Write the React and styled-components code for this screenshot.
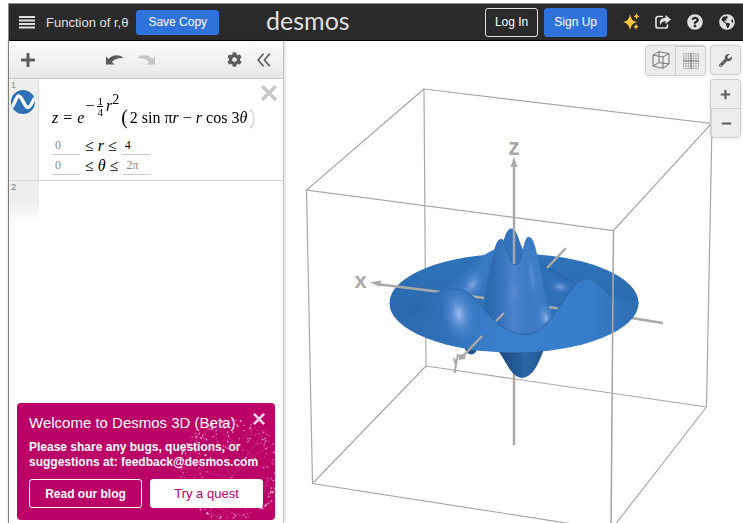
import React from 'react'
import styled, { createGlobalStyle } from 'styled-components';
import { FaCog, FaPlus, FaMinus, FaWrench, FaQuestionCircle, FaGlobeAmericas } from 'react-icons/fa';

const GlobalStyle = createGlobalStyle`
    * {
        box-sizing: border-box;
    }
    body {
        margin: 0;
        background: #fff;
        font-family: "Liberation Sans", Arial, sans-serif;
        font-size: 12px;
    }
    button, input {
        font-family: inherit;
    }
`;
const Page = styled.div`
    display: flex;
    flex-direction: column;
    height: 100vh;
    padding: 3px 0 0 8px;
    overflow: hidden;
`;
const Frame = styled.div`
    display: flex;
    flex-direction: column;
    flex: 1;
    min-height: 0;
    border-top: 1px solid #8c8c8c;
    border-left: 1px solid #8c8c8c;
`;
const Header = styled.header`
    display: flex;
    align-items: center;
    height: 37px;
    padding: 0 7px 0 9px;
    background: #2a2a2a;
    border-bottom: 1px solid #000;
    color: #e0e0e0;
`;
const IconButton = styled.button`
    display: flex;
    align-items: center;
    justify-content: center;
    width: ${props => props.$width || 18}px;
    height: 24px;
    padding: 0;
    border: none;
    background: none;
    color: ${props => props.$color || '#e0e0e0'};
    font-size: ${props => props.$size || 16}px;
    cursor: pointer;
`;
const Title = styled.h1`
    margin: 0 8px 0 10px;
    font-size: 13px;
    font-weight: normal;
    white-space: nowrap;
`;
const Button = styled.button`
    height: ${props => props.$small ? 25 : 29}px;
    padding: 0 ${props => props.$small ? 11 : 9}px;
    border: 1px solid ${props => props.$outline ? '#ddd' : '#2f72dc'};
    border-radius: 3px;
    background: ${props => props.$outline ? 'transparent' : '#2f72dc'};
    color: #fff;
    font-size: 12px;
    white-space: nowrap;
    cursor: pointer;
`;
const Logo = styled.a`
    margin-left: 47px;
    color: #e0e0e0;
    font-family: Lato, sans-serif;
    font-size: 25px;
    line-height: 32px;
    height: 36px;
    text-decoration: none;
`;
const Account = styled.nav`
    display: flex;
    align-items: center;
    gap: 6px;
    margin-left: auto;
`;
const HeaderIcons = styled.div`
    display: flex;
    gap: 14px;
    margin-left: 9px;
`;
const Main = styled.main`
    display: flex;
    flex: 1;
    min-height: 0;
`;
const Sidebar = styled.aside`
    display: flex;
    flex-direction: column;
    flex: 0 0 275px;
    border-right: 1px solid #c4c4c4;
    box-shadow: 0 0 4px rgba(0, 0, 0, 0.25);
    z-index: 1;
`;
const Toolbar = styled.div`
    display: flex;
    align-items: center;
    height: 38px;
    padding: 0 4px 0 10px;
    background: linear-gradient(#fcfcfc, #e8e8e8);
    border-bottom: 1px solid #c8c8c8;
`;
const History = styled.div`
    display: flex;
    gap: 13px;
    margin: 0 auto;
    padding-left: 4px;
`;
const Row = styled.section`
    display: flex;
    height: ${props => props.$height}px;
    border-bottom: 1px solid ${props => props.$empty ? 'transparent' : '#d8d8d8'};
`;
const Gutter = styled.div`
    flex: 0 0 30px;
    padding: 2px;
    background: ${props => props.$fade ? 'linear-gradient(#eee 45%, #fff)' : '#eee'};
    border-right: 1px solid ${props => props.$fade ? 'transparent' : '#dcdcdc'};
    color: ${props => props.$fade ? '#6a7f94' : '#9a8a70'};
    font-size: 9px;
    line-height: 9px;
`;
const CurveButton = styled(IconButton)`
    width: 24px;
`;
const Expression = styled.div`
    display: flex;
    flex-direction: column;
    flex: 1;
    min-width: 0;
    padding: 4px 5px 0 13px;
    font-family: "Liberation Serif", "Times New Roman", serif;
    font-size: 16px;
`;
const RemoveButton = styled(IconButton)`
    align-self: flex-end;
    height: 20px;
`;
const Formula = styled.div`
    display: flex;
    align-items: flex-end;
    width: 204px;
    height: 41px;
    margin-top: -9px;
    padding-bottom: 8px;
    line-height: 18px;
    white-space: nowrap;
    mask-image: linear-gradient(to right, #000 96%, transparent);
`;
const Base = styled.span`
    display: flex;
    gap: 5px;
    margin-right: 1px;
`;
const Exponent = styled.span`
    display: inline-flex;
    align-items: center;
    align-self: flex-start;
    height: 24px;
    font-size: 16px;
    line-height: 24px;
`;
const Fraction = styled.span`
    display: inline-flex;
    flex-direction: column;
    margin: 0 2px;
    padding: 0 1px;
    font-size: 11px;
    line-height: 10px;
`;
const Numerator = styled.span`
    border-bottom: 1px solid #000;
`;
const Squared = styled.sup`
    align-self: flex-start;
    font-size: 14px;
    line-height: 12px;
`;
const Paren = styled.span`
    padding: 0 2px;
    font-size: 20px;
    line-height: 20px;
    color: ${props => props.$ghost ? '#888' : '#000'};
`;
const Domain = styled.div`
    display: flex;
    align-items: flex-end;
    gap: 5px;
    height: 20px;
    line-height: 18px;
`;
const Bound = styled.input`
    width: 28px;
    height: 18px;
    padding: 0 3px;
    border: none;
    border-bottom: 1px solid #ccc;
    background: none;
    color: ${props => props.$set ? '#000' : '#888'};
    font-family: "Liberation Serif", serif;
    font-size: 12px;
`;
const Promo = styled.section`
    position: relative;
    margin: auto 8px 3px;
    padding: 11px 12px 12px;
    border-radius: 4px;
    background: #bb0068;
    color: #fff;
    overflow: hidden;
`;
const Stars = styled.svg`
    position: absolute;
    right: 0;
    bottom: 0;
    width: 104px;
    height: 104px;
`;
const PromoTop = styled.div`
    position: relative;
    display: flex;
    justify-content: space-between;
    margin-right: -5px;
    height: 26px;
`;
const PromoTitle = styled.h2`
    margin: 0;
    font-size: 15px;
    font-weight: normal;
    line-height: 18px;
    white-space: nowrap;
`;
const PromoClose = styled(IconButton)`
    height: 10px;
`;
const PromoText = styled.p`
    position: relative;
    margin: 0 -8px 9px 0;
    font-size: 12px;
    font-weight: bold;
    line-height: 15px;
`;
const PromoActions = styled.div`
    position: relative;
    display: flex;
    gap: 8px;
`;
const PromoButton = styled.button`
    flex: 1;
    height: 29px;
    padding: 0;
    border: 1px solid #fff;
    border-radius: 3px;
    background: ${props => props.$filled ? '#fff' : '#bb0068'};
    color: ${props => props.$filled ? '#bb0068' : '#fff'};
    font-size: ${props => props.$filled ? 13 : 12}px;
    font-weight: ${props => props.$filled ? 'normal' : 'bold'};
    cursor: pointer;
`;
const Graph = styled.div`
    position: relative;
    flex: 1;
    min-width: 0;
`;
const Plot = styled.svg`
    display: block;
    width: 100%;
    height: 100%;
`;
const Controls = styled.div`
    position: absolute;
    top: 4px;
    right: 2px;
    display: flex;
    align-items: flex-start;
    gap: 4px;
`;
const Column = styled.div`
    display: flex;
    flex-direction: column;
    gap: 4px;
`;
const ControlGroup = styled.div`
    display: flex;
    flex-direction: ${props => props.$vertical ? 'column' : 'row'};
    border: 1px solid #d0d0d0;
    border-radius: 4px;
    background: #ededed;
    box-shadow: 0 0 4px rgba(0, 0, 0, 0.12);
`;
const Control = styled(IconButton)`
    width: ${props => props.$wide ? 29 : 28}px;
    height: 28px;
    color: #5c5c5c;

    & + & {
        box-sizing: content-box;
        border-${props => props.$vertical ? 'top' : 'left'}: 1px solid #d0d0d0;
    }
`;

const MenuIcon = () => (
    <svg width="16" height="14" viewBox="0 0 16 14" fill="#e0e0e0">
        <path d="M0 1h16v2H0zM0 4.400h16v2H0zM0 8h16v2H0zM0 11.400h16v2H0z" />
    </svg>
)
const ArrowIcon = ({ flip }) => (
    <svg width="18" height="10" viewBox="0 0 18 10" fill={flip ? '#c4c4c4' : '#5c5c5c'}>
        <path transform={flip ? 'translate(18 0) scale(-1 1)' : undefined} d="M0 1.500v8h8.500L5.900 7C9 4 13.500 2.400 18 3.400 14-.9 6.500-1 2.700 4z" />
    </svg>
)
const CollapseIcon = () => (
    <svg width="14" height="14" viewBox="0 0 14 14" fill="none" stroke="#5c5c5c" strokeWidth="1.700">
        <path d="M6.500.700 1.200 7l5.300 6.300M12.700.700 7.400 7l5.300 6.300" />
    </svg>
)
const CrossIcon = ({ size, width, color }) => (
    <svg width={size} height={size} viewBox="0 0 14 14" stroke={color} strokeWidth={width}>
        <path d="M1 1l12 12M13 1 1 13" />
    </svg>
)
const CurveIcon = () => (
    <svg width="24" height="24" viewBox="0 0 24 24">
        <clipPath id="badge"><circle cx="12" cy="12" r="12" /></clipPath>
        <g clipPath="url(#badge)">
            <path d="M0 0h24v24H0z" fill="#2d70b3" />
            <path d="M0 18C4 15 5 6 7.500 6c4 0 5.500 11.500 9.500 11.500 2.500 0 3.500-5 7-9.500" fill="none" stroke="#fff" strokeWidth="3.500" />
        </g>
    </svg>
)
const SparkleIcon = () => (
    <svg width="17" height="18" viewBox="0 0 17 18" fill="#fbc63c">
        <path d="M7 1q.800 7 7 8-6.200 1-7 8.500Q6.200 10 0 9q6.200-1 7-8zM13.500 0q.300 3 2.800 3.500-2.500.500-2.800 3-.300-2.500-2.700-3Q13.200 3 13.500 0zM13 10.500q.300 2.800 2.700 3.300-2.400.400-2.700 3.200-.300-2.800-2.700-3.200 2.400-.500 2.700-3.300z" />
    </svg>
)
const ShareIcon = () => (
    <svg width="16" height="14" viewBox="0 0 16 14">
        <path d="M8 1.500H3A2 2 0 0 0 1 3.500V11a2 2 0 0 0 2 2h7.500a2 2 0 0 0 2-2V9.500" fill="none" stroke="#e0e0e0" strokeWidth="1.700" />
        <path d="M10.500 0 16 4.500 10.500 9V6.300C7.500 6.200 6 7.500 5.700 10.200 3.500 6.500 5.500 2.700 10.500 2.700z" fill="#e0e0e0" />
    </svg>
)
const CubeIcon = () => (
    <svg width="18" height="18" viewBox="0 0 18 18" fill="none" stroke="#666" strokeWidth=".9">
        <path d="M1 4 11 6v11.300L1 15zM7 .700 17 2.500v10.500L7 11.500zM1 4 7 .700M11 6l6-3.500M11 17.300l6-4.300M1 15l6-3.500" />
    </svg>
)
const GridIcon = () => (
    <svg width="16" height="16" viewBox="0 0 16 16" fill="none" stroke="#999" strokeWidth=".5">
        <path d="M.500.500h15v15H.500zM3 0v16M5.500 0v16M10.500 0v16M13 0v16M0 3h16M0 5.500h16M0 10.500h16M0 13h16" />
        <path d="M8 0v16M0 8h16" stroke="#666" strokeWidth="1" />
    </svg>
)

const noise = n => {
    const value = Math.sin(n * 127.1) * 43758.5453;
    return value - Math.floor(value);
};

// dots scattered on a ring, thicker towards the right edge
const stars = Array.from({ length: 420 }, (_, i) => {
    const angle = noise(i + 1) * Math.PI * 2;
    const ring = 50 - noise(i + 500) * noise(i + 900) * 34;
    return {
        x: 60 + Math.cos(angle) * ring * 1.05,
        y: 54 + Math.sin(angle) * ring,
        r: 0.3 + noise(i + 1300) * 0.7,
        opacity: 0.25 + noise(i + 1700) * 0.5,
    };
});

const StarField = () => (
    <Stars viewBox="0 0 104 104" aria-hidden="true">
        <g fill="none" stroke="#fff" strokeWidth=".5" opacity=".25">
            <path d="M10 50 40 8l42 32 22-12M10 50l50 12 22-22M40 8l20 54 44 10M20 84l40-22 18 40M10 50l10 34 58 18M60 62 96 12" />
        </g>
        {stars.map((star, i) => (
            <circle key={i} cx={star.x} cy={star.y} r={star.r} fill="#fff" opacity={star.opacity} />
        ))}
    </Stars>
)

const Surface = () => (
    <Plot viewBox="284 41 459 482" preserveAspectRatio="xMidYMin slice" role="img" aria-label="3D graph">
        <defs>
            <linearGradient id="disc" x1="0" x2="0" y1="0" y2="1">
                <stop offset="0" stopColor="#2f73ba" />
                <stop offset=".5" stopColor="#2c6bb0" />
                <stop offset="1" stopColor="#3a7fcc" />
            </linearGradient>
            <linearGradient id="lip" x1="0" x2="1" y1="0" y2="0">
                <stop offset="0" stopColor="#2c69ab" />
                <stop offset=".2" stopColor="#3170b7" />
                <stop offset=".45" stopColor="#3b80cd" />
                <stop offset=".8" stopColor="#387dca" />
                <stop offset="1" stopColor="#2d6eb3" />
            </linearGradient>
            <linearGradient id="peak" x1="0" x2="1" y1="0" y2="0">
                <stop offset="0" stopColor="#2a67a9" />
                <stop offset=".2" stopColor="#316fb7" />
                <stop offset=".42" stopColor="#4a83cd" />
                <stop offset=".6" stopColor="#3d7ac5" />
                <stop offset=".78" stopColor="#3d7dc8" />
                <stop offset="1" stopColor="#2a67a9" />
            </linearGradient>
            <linearGradient id="under" x1="0" x2="1" y1="0" y2="0">
                <stop offset="0" stopColor="#1a4778" />
                <stop offset=".6" stopColor="#2a66a8" />
                <stop offset="1" stopColor="#22588f" />
            </linearGradient>
            <linearGradient id="ridge" x1="0" x2="1" y1="1" y2="0">
                <stop offset="0" stopColor="#2d6cb0" />
                <stop offset="1" stopColor="#3a7dc8" />
            </linearGradient>
            <radialGradient id="glow">
                <stop offset="0" stopColor="#a3bff5" />
                <stop offset=".4" stopColor="#6e9be0" stopOpacity=".6" />
                <stop offset="1" stopColor="#4a86d3" stopOpacity="0" />
            </radialGradient>
            <radialGradient id="shade">
                <stop offset="0" stopColor="#24599a" stopOpacity=".8" />
                <stop offset="1" stopColor="#2a66a8" stopOpacity="0" />
            </radialGradient>
        </defs>

        <path d="M424 89 711.500 123.500 613.500 230.500 306.500 190zM424 89l2 277M426 366l280.500 41M426 366 312.500 483.500M306.500 190l6 293.500L611 530M706.500 407 611 530M712 123.500 706.500 407" fill="none" stroke="#a8a8a8" strokeWidth="1.200" />
        <path d="M514 370v75M625 317l38 6" stroke="#a9a9a9" strokeWidth="2.400" />

        <path d="M464 346q2 8 7 8.500 5 0 7-8z" fill="#1f5490" />
        <path d="M498 351c7 7 12 26 24 27 13-1 18-20 22-28z" fill="url(#under)" />
        <ellipse cx="514" cy="303" rx="124.500" ry="49.500" fill="url(#disc)" />

        <path d="M434 296c14-7 28-22 41-34 9-8 16-11 23-14 5 0 8 3 12 8l-12 60z" fill="url(#ridge)" />
        <ellipse cx="472" cy="285" rx="13" ry="22" fill="url(#glow)" opacity=".65" transform="rotate(34 472 285)" />
        <path d="M541 263c13 9 25 13 37 22l-12 20-16 16-20-14z" fill="#2f6fb8" />
        <path d="M541 264c13 9 25 13 36 21" fill="none" stroke="#2a65a6" strokeWidth="2" opacity=".7" />
        <ellipse cx="560" cy="287" rx="12" ry="7" fill="url(#glow)" opacity=".7" transform="rotate(12 560 287)" />
        <path d="M501 256c1-9 4-27 10-27.500 6-.500 8 13 12 21l-4 20z" fill="#3573bd" />
        <path d="M376 284l65 8M469 296l15 2M549 307l12 2M566 248l-19 20" stroke="#a9a9a9" strokeWidth="2.400" />

        <path d="M482 318c3-18 5-36 9-55 3-12 5-24 10-24 6 0 7 25 14 26 8 0 8-28 14-28 7 0 9 27 12 36 3 12 5 26 8 36l8 14-30 25-25-8z" fill="url(#peak)" />
        <path d="M501 239c6 0 7 25 14 26 8 0 8-28 14-28" fill="none" stroke="#2a65a8" strokeWidth="1.200" opacity=".5" />
        <ellipse cx="514" cy="292" rx="10" ry="28" fill="url(#glow)" opacity=".2" />
        <ellipse cx="532" cy="276" rx="6" ry="36" fill="url(#glow)" opacity=".3" transform="rotate(-8 532 276)" />
        <ellipse cx="546" cy="318" rx="9" ry="18" fill="url(#glow)" opacity=".85" transform="rotate(-14 546 318)" />
        <path d="M504 313l-9 9" stroke="#a9a9a9" strokeWidth="2.400" />

        <path d="M408 304c18-4 29-15.500 47-15.500 15 0 23 13 33 25 10 11 22 21 37 21 29 0 42-54 60-55 12 0 17 13 28 18q12 3 25.500 4c0 27-56 50.500-124.500 50.500-68 0-121-22-124-46 5-3 10-1 18-2z" fill="url(#lip)" />
        <path d="M448 289c20-3 30 14 40 25 10 10 22 20.500 37 20.500 29 0 42-54 60-55" fill="none" stroke="#2a65a8" strokeWidth="1.500" opacity=".6" />
        <ellipse cx="459" cy="314" rx="17" ry="30" fill="url(#glow)" transform="rotate(-10 459 314)" />
        <ellipse cx="417" cy="308" rx="28" ry="10" fill="url(#shade)" opacity=".45" transform="rotate(-12 417 308)" />

        <path d="M514 165v99M482 336l-17 18" stroke="#a9a9a9" strokeWidth="2.400" />
        <path d="M613.500 230.500 611 530" stroke="#a8a8a8" strokeWidth="1.600" />
        <g fill="#a9a9a9">
            <path d="M514 157l3.500 10h-7zM370 282.500l11-2-1 6zM459 355l7-2-1 6-6 1z" />
            <text x="360.500" y="288" textAnchor="middle" fontFamily="Liberation Sans" fontWeight="bold" fontSize="22">x</text>
            <text x="514" y="155" textAnchor="middle" fontFamily="Liberation Sans" fontWeight="bold" fontSize="23">z</text>
        </g>
        <path d="M454 358l2 8M458 354l-3.500 19" stroke="#a9a9a9" strokeWidth="2" />
    </Plot>
)

const App = () => {
  return (
    <Page>
    <GlobalStyle />
    <Frame>
        <Header>
            <IconButton aria-label="Open graphs"><MenuIcon /></IconButton>
            <Title>Function of r,θ</Title>
            <Button $small>Save Copy</Button>
            <Logo href="#">desmos</Logo>
            <Account>
                <Button $outline>Log In</Button>
                <Button>Sign Up</Button>
                <HeaderIcons>
                    <IconButton aria-label="What's new"><SparkleIcon /></IconButton>
                    <IconButton aria-label="Share"><ShareIcon /></IconButton>
                    <IconButton aria-label="Help"><FaQuestionCircle /></IconButton>
                    <IconButton aria-label="Language"><FaGlobeAmericas /></IconButton>
                </HeaderIcons>
            </Account>
        </Header>
        <Main>
            <Sidebar>
                <Toolbar>
                    <IconButton $color="#5c5c5c" aria-label="Add item"><FaPlus /></IconButton>
                    <History>
                        <IconButton aria-label="Undo"><ArrowIcon /></IconButton>
                        <IconButton aria-label="Redo"><ArrowIcon flip /></IconButton>
                    </History>
                    <IconButton $color="#5c5c5c" $width={30} $size={15} aria-label="Edit list"><FaCog /></IconButton>
                    <IconButton $width={30} aria-label="Hide list"><CollapseIcon /></IconButton>
                </Toolbar>
                <Row $height={102}>
                    <Gutter>
                        1
                        <CurveButton aria-label="Hide expression"><CurveIcon /></CurveButton>
                    </Gutter>
                    <Expression>
                        <RemoveButton aria-label="Delete expression"><CrossIcon size={16} width={3} color="#c8c8c8" /></RemoveButton>
                        <Formula>
                            <Base><i>z</i><span>=</span><i>e</i></Base>
                            <Exponent>
                                −
                                <Fraction><Numerator>1</Numerator><span>4</span></Fraction>
                                <i>r</i><Squared>2</Squared>
                            </Exponent>
                            <Paren>(</Paren>
                            <span>2 sin π<i>r</i> − <i>r</i> cos 3<i>θ</i></span>
                            <Paren $ghost>)</Paren>
                        </Formula>
                        <Domain>
                            <Bound defaultValue="0" aria-label="r minimum" />
                            <span>≤ <i>r</i> ≤</span>
                            <Bound $set defaultValue="4" aria-label="r maximum" />
                        </Domain>
                        <Domain>
                            <Bound defaultValue="0" aria-label="θ minimum" />
                            <span>≤ <i>θ</i> ≤</span>
                            <Bound defaultValue="2π" aria-label="θ maximum" />
                        </Domain>
                    </Expression>
                </Row>
                <Row $height={44} $empty>
                    <Gutter $fade>2</Gutter>
                </Row>
                <Promo>
                    <StarField />
                    <PromoTop>
                        <PromoTitle>Welcome to Desmos 3D (Beta)</PromoTitle>
                        <PromoClose aria-label="Dismiss"><CrossIcon size={12} width={3} color="#f6d3e6" /></PromoClose>
                    </PromoTop>
                    <PromoText>Please share any bugs, questions, or suggestions at: feedback@desmos.com</PromoText>
                    <PromoActions>
                        <PromoButton>Read our blog</PromoButton>
                        <PromoButton $filled>Try a quest</PromoButton>
                    </PromoActions>
                </Promo>
            </Sidebar>
            <Graph>
                <Surface />
                <Controls>
                    <ControlGroup>
                        <Control $wide aria-label="3D view"><CubeIcon /></Control>
                        <Control $wide aria-label="Grid view"><GridIcon /></Control>
                    </ControlGroup>
                    <Column>
                        <ControlGroup>
                            <Control $size={13} aria-label="Graph settings"><FaWrench /></Control>
                        </ControlGroup>
                        <ControlGroup $vertical>
                            <Control $vertical $size={11} aria-label="Zoom in"><FaPlus /></Control>
                            <Control $vertical $size={11} aria-label="Zoom out"><FaMinus /></Control>
                        </ControlGroup>
                    </Column>
                </Controls>
            </Graph>
        </Main>
    </Frame>
   </Page>
  )
}

export default App
